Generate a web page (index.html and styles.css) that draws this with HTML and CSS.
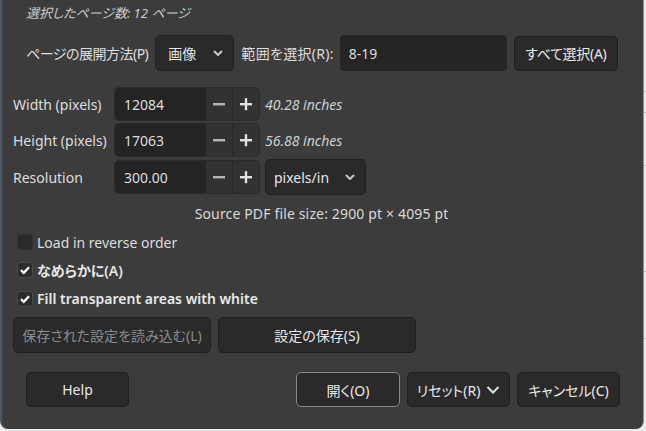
FILE: index.html
```html
<!DOCTYPE html>
<html lang="ja">
<head>
<meta charset="utf-8">
<title>PDF Import</title>
<link rel="stylesheet" href="styles.css">
</head>
<body>
<div class="screen">
  <div class="dialog">
    <div class="title">選択したページ数: 12 ページ</div>

    <div class="row-pages">
      <span class="lbl lbl-mode">ページの展開方法(P)</span>
      <div class="combo combo-mode">
        <span>画像</span>
        <svg class="chev" viewBox="0 0 10 6" width="10" height="6"><path d="M1 1 L5 5 L9 1" fill="none" stroke="currentColor" stroke-width="2"/></svg>
      </div>
      <span class="lbl lbl-range">範囲を選択(R):</span>
      <div class="entry entry-range">8-19</div>
      <button class="btn btn-all">すべて選択(A)</button>
    </div>

    <div class="size-grid">
      <span class="lbl">Width (pixels)</span>
      <div class="spin">
        <span class="spin-val">12084</span>
        <span class="spin-btn minus"><svg viewBox="0 0 14 14" width="14" height="14"><rect x="1" y="6" width="12" height="2.4" fill="currentColor"/></svg></span>
        <span class="spin-btn plus"><svg viewBox="0 0 14 14" width="14" height="14"><rect x="1" y="6" width="12" height="2.4" fill="currentColor"/><rect x="5.8" y="1.2" width="2.4" height="12" fill="currentColor"/></svg></span>
      </div>
      <span class="unit">40.28 inches</span>

      <span class="lbl">Height (pixels)</span>
      <div class="spin">
        <span class="spin-val">17063</span>
        <span class="spin-btn minus"><svg viewBox="0 0 14 14" width="14" height="14"><rect x="1" y="6" width="12" height="2.4" fill="currentColor"/></svg></span>
        <span class="spin-btn plus"><svg viewBox="0 0 14 14" width="14" height="14"><rect x="1" y="6" width="12" height="2.4" fill="currentColor"/><rect x="5.8" y="1.2" width="2.4" height="12" fill="currentColor"/></svg></span>
      </div>
      <span class="unit">56.88 inches</span>

      <span class="lbl">Resolution</span>
      <div class="spin">
        <span class="spin-val">300.00</span>
        <span class="spin-btn minus"><svg viewBox="0 0 14 14" width="14" height="14"><rect x="1" y="6" width="12" height="2.4" fill="currentColor"/></svg></span>
        <span class="spin-btn plus"><svg viewBox="0 0 14 14" width="14" height="14"><rect x="1" y="6" width="12" height="2.4" fill="currentColor"/><rect x="5.8" y="1.2" width="2.4" height="12" fill="currentColor"/></svg></span>
      </div>
      <div class="combo combo-unit">
        <span>pixels/in</span>
        <svg class="chev" viewBox="0 0 10 6" width="10" height="6"><path d="M1 1 L5 5 L9 1" fill="none" stroke="currentColor" stroke-width="2"/></svg>
      </div>
    </div>

    <div class="source">Source PDF file size: 2900 pt × 4095 pt</div>

    <div class="checks">
      <div class="check">
        <span class="box"></span>
        <span class="check-text">Load in reverse order</span>
      </div>
      <div class="check on">
        <span class="box"><svg viewBox="0 0 16 16" width="16" height="16"><path d="M3.4 8.2 L6.6 11.2 L12.6 4.8" fill="none" stroke="currentColor" stroke-width="2.6"/></svg></span>
        <span class="check-text">なめらかに(A)</span>
      </div>
      <div class="check on">
        <span class="box"><svg viewBox="0 0 16 16" width="16" height="16"><path d="M3.4 8.2 L6.6 11.2 L12.6 4.8" fill="none" stroke="currentColor" stroke-width="2.6"/></svg></span>
        <span class="check-text">Fill transparent areas with white</span>
      </div>
    </div>

    <div class="settings-row">
      <button class="btn btn-settings disabled">保存された設定を読み込む(L)</button>
      <button class="btn btn-settings">設定の保存(S)</button>
    </div>

    <div class="action-row">
      <button class="btn btn-act">Help</button>
      <span class="spacer"></span>
      <button class="btn btn-act default">開く(O)</button>
      <button class="btn btn-act btn-reset">リセット(R)<svg viewBox="0 0 14 10" width="14" height="10"><path d="M1.5 2 L7 7.5 L12.5 2" fill="none" stroke="currentColor" stroke-width="2"/></svg></button>
      <button class="btn btn-act">キャンセル(C)</button>
    </div>
  </div>
  <div class="backdrop">
    <span class="tick t1"></span>
    <span class="tick t2"></span>
    <span class="tick t3"></span>
    <span class="tick t4"></span>
    <span class="tick t5"></span>
  </div>
</div>
</body>
</html>
```

FILE: styles.css
```css
html, body {
  margin: 0;
  padding: 0;
}

body {
  width: 646px;
  height: 431px;
  overflow: hidden;
  background: #ececec;
  font-family: "Noto Sans", "Noto Sans CJK JP", sans-serif;
  font-size: 14px;
  font-feature-settings: "palt";
}

.screen {
  display: flex;
  height: 431px;
}

.dialog {
  box-sizing: border-box;
  width: 644px;
  height: 429px;
  flex: none;
  background: #3c3c3c;
  border-left: 2px solid #4b5866;
  border-right: 1px solid #8e8e8e;
  border-radius: 0 0 8px 8px;
  color: #dedede;
  display: flex;
  flex-direction: column;
  padding: 0 25px 0 11px;
}

button {
  font: inherit;
  font-feature-settings: "palt";
}

.title {
  height: 27px;
  line-height: 27px;
  padding-left: 13px;
  font-style: italic;
  font-size: 13px;
  color: #cccccc;
}

.row-pages {
  display: flex;
  align-items: center;
  margin-top: 8px;
  height: 36px;
  padding-left: 13px;
}

.lbl {
  white-space: nowrap;
}

.lbl-mode {
  letter-spacing: -0.5px;
}

.combo {
  box-sizing: border-box;
  display: flex;
  align-items: center;
  justify-content: space-between;
  background: #2a2a2a;
  border: 1px solid #202020;
  border-radius: 5px;
  color: #e6e6e6;
}

.combo .chev {
  color: #c8c8c8;
}

.combo-mode {
  width: 79px;
  height: 36px;
  margin-left: 7px;
  padding: 0 10px 0 12px;
}

.lbl-range {
  margin-left: 7px;
  letter-spacing: 0.3px;
}

.entry {
  box-sizing: border-box;
  background: #252525;
  border-radius: 4px;
  color: #dcdcdc;
  display: flex;
  align-items: center;
}

.entry-range {
  width: 167px;
  height: 36px;
  margin-left: 6px;
  padding-left: 9px;
}

.btn {
  box-sizing: border-box;
  background: #2a2a2a;
  border: 1px solid #1f1f1f;
  border-radius: 5px;
  color: #e8e8e8;
  display: flex;
  align-items: center;
  justify-content: center;
  padding: 0;
  white-space: nowrap;
}

.btn-all {
  width: 104px;
  height: 35px;
  margin-left: 7px;
  letter-spacing: -0.3px;
}

.size-grid {
  display: grid;
  grid-template-columns: 97px 146px auto;
  grid-template-rows: 34px 34px 36px;
  column-gap: 4px;
  row-gap: 2px;
  margin-top: 16px;
  align-items: center;
}

.size-grid .unit {
  font-style: italic;
  color: #cfcfcf;
  margin-left: 1px;
}

.spin {
  box-sizing: border-box;
  display: flex;
  height: 34px;
  border: 1px solid #2b2b2b;
  border-radius: 5px;
  overflow: hidden;
  background: #323232;
}

.spin-val {
  flex: 1;
  background: #242424;
  display: flex;
  align-items: center;
  padding-left: 9px;
  color: #dedede;
}

.spin-btn {
  width: 27px;
  flex: none;
  display: flex;
  align-items: center;
  justify-content: center;
  border-left: 1px solid #262626;
  box-sizing: border-box;
}

.spin-btn.minus {
  color: #b4b4b4;
}

.spin-btn.plus {
  color: #e2e2e2;
}

.combo-unit {
  width: 101px;
  height: 36px;
  margin-left: 1px;
  padding: 0 10px 0 8px;
}

.source {
  margin-top: 9px;
  height: 20px;
  line-height: 20px;
  text-align: center;
  color: #dadada;
  padding-left: 12px;
  letter-spacing: 0.15px;
}

.checks {
  margin-top: 4px;
  display: flex;
  flex-direction: column;
  padding-left: 4px;
}

.check {
  height: 28px;
  display: flex;
  align-items: center;
  gap: 4px;
}

.check + .check {
  height: 28.5px;
}

.box {
  box-sizing: border-box;
  width: 16px;
  height: 16px;
  border-radius: 3px;
  background: #2a2a2a;
  border: 1px solid #333333;
  display: flex;
  align-items: center;
  justify-content: center;
  color: #ffffff;
}

.check.on .box {
  background: #2c2c2c;
  border-color: #4a4a4a;
}

.check.on .check-text {
  font-weight: 600;
  color: #e8e8e8;
}

.settings-row {
  display: flex;
  gap: 7px;
  margin-top: 4px;
  height: 36px;
}

.btn-settings {
  width: 198px;
  height: 36px;
}

.btn-settings.disabled {
  color: #8c8c8c;
}

.action-row {
  display: flex;
  align-items: center;
  gap: 7px;
  margin-top: 19px;
  height: 35px;
  padding-left: 13px;
  margin-right: -2px;
}

.spacer {
  flex: 1;
}

.btn-act {
  width: 103px;
  height: 35px;
}

.btn-act.default {
  width: 104px;
  border-color: #8a8a8a;
}

.btn-reset {
  gap: 6px;
}

.btn-reset svg {
  color: #e0e0e0;
}

.backdrop {
  flex: 1;
  display: flex;
  flex-direction: column;
}

.tick {
  display: block;
  height: 1px;
  background: #b8b8b8;
}

.t1 { margin-top: 91px; }
.t2 { margin-top: 20px; }
.t3 { margin-top: 52px; }
.t4 { margin-top: 105px; }
.t5 { margin-top: 66px; }
```
